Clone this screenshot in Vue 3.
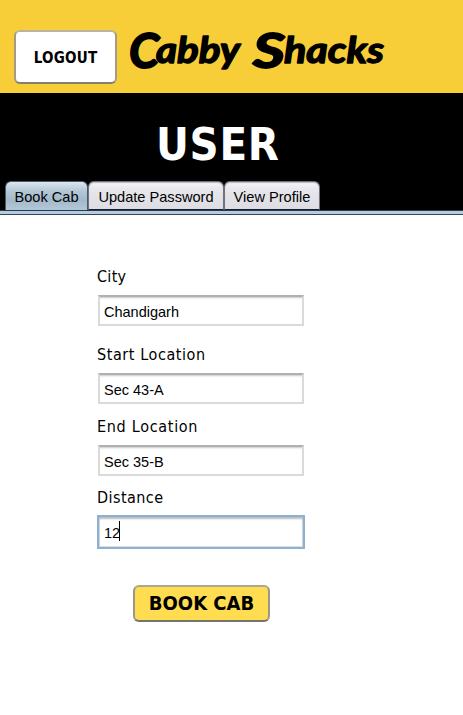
<script setup>
import { ref } from 'vue'

const activeTab = ref('Book Cab')
const tabs = [
  { label: 'Book Cab', size: 'short' },
  { label: 'Update Password', size: 'long' },
  { label: 'View Profile', size: 'medium' },
]
const city = 'Chandigarh'
const start = 'Sec 43-A'
const end = 'Sec 35-B'
const distance = '12'
</script>

<template>
  <main class="app">
    <header class="brand">
      <button class="logout">LOGOUT</button>
      <svg class="logo" width="270" height="60" viewBox="0 0 270 60">
        <text class="cap" x="2" y="42" textLength="30" lengthAdjust="spacingAndGlyphs">C</text>
        <text class="word" x="29" y="37" textLength="84" lengthAdjust="spacingAndGlyphs">abby</text>
        <text class="cap" x="126" y="42" textLength="32" lengthAdjust="spacingAndGlyphs">S</text>
        <text class="word" x="157" y="37" textLength="100" lengthAdjust="spacingAndGlyphs">hacks</text>
      </svg>
    </header>
    <section class="hero">
      <h1>USER</h1>
      <nav class="tabs">
        <button
          v-for="t in tabs"
          :key="t.label"
          :class="['tab', t.size, { active: t.label === activeTab }]"
          @click="activeTab = t.label"
        >{{ t.label }}</button>
      </nav>
    </section>
    <div class="strip"></div>
    <form class="form" @submit.prevent>
      <label class="city">City</label>
      <div class="field">{{ city }}</div>
      <label class="start">Start Location</label>
      <div class="field">{{ start }}</div>
      <label class="end">End Location</label>
      <div class="field">{{ end }}</div>
      <label class="dist">Distance</label>
      <div class="field focused">{{ distance }}<i class="caret"></i></div>
      <button class="book">BOOK CAB</button>
    </form>
  </main>
</template>

<style>
body { background: #fff; }
</style>

<style scoped>
* { box-sizing: border-box; }
button { margin: 0; padding: 0; white-space: nowrap; }
.app {
  width: 463px;
  height: 715px;
  overflow: hidden;
  background: #fff;
  color: #000;
  font-family: "DejaVu Sans Condensed", "DejaVu Sans", sans-serif;
  font-stretch: condensed;
}
.brand {
  height: 93px;
  background: #f7ce37;
  display: flex;
  align-items: flex-start;
  padding: 30px 0 0 14px;
}
.logout {
  width: 103px;
  height: 54px;
  border: 2px solid #aaa;
  border-color: #b9b4a0 #a39c85 #85806e #a39c85;
  border-radius: 6px;
  background: #fff;
  font: bold 15px "DejaVu Sans Condensed", sans-serif;
  font-stretch: condensed;
  letter-spacing: 0.25px;
  padding-top: 2px;
  color: #000;
}
.logo { margin: -4px 0 0 10px; overflow: visible; }
.logo text {
  font-family: Lato, sans-serif;
  font-weight: 700;
  font-style: italic;
  fill: #000;
  stroke: #000;
  stroke-linejoin: round;
  stroke-linecap: round;
}
.logo .cap { font-size: 47px; stroke-width: 1.8px; }
.logo .word { font-size: 36px; stroke-width: 1.4px; }
.hero {
  height: 117px;
  background: #000;
  display: flex;
  flex-direction: column;
}
h1 {
  margin: 25px 0 0 156px;
  height: 54px;
  font-size: 45px;
  line-height: 54px;
  font-weight: bold;
  letter-spacing: 0.7px;
  color: #fff;
}
.tabs { display: flex; margin: 9px 0 0 5px; }
.tab {
  height: 29px;
  border: 1px solid #70737d;
  border-bottom-color: #191e2b;
  border-radius: 6px 6px 0 0;
  background: linear-gradient(#f8f8fa, #e7e7ec 25%, #dcdce2);
  box-shadow: inset 0 1px 1px #b5b6bd;
  font: 14.6px "Liberation Sans", sans-serif;
  line-height: 30px;
  color: #000;
}
.tab.active {
  border-color: #47586d;
  border-bottom: 0;
  background: linear-gradient(#dce6ed, #b2c5d3 35%, #a2b9cb 65%, #b3c8d8);
  box-shadow: none;
}
.short { width: 83px; }
.long { width: 136px; }
.medium { width: 96px; }
.strip {
  height: 5px;
  background: #b5cce0;
  border-top: 1px solid #2d394e;
  border-bottom: 1px solid #35445a;
}
.form { display: flex; flex-direction: column; align-items: flex-start; padding-left: 97px; }
label { font-size: 16px; height: 20px; line-height: 20px; letter-spacing: 0.58px; }
.city { margin-top: 52px; letter-spacing: 0.3px; }
.start { margin-top: 19px; }
.end { margin-top: 13px; letter-spacing: 0.7px; }
.dist { margin-top: 12px; letter-spacing: 0.45px; }
.field {
  width: 206px;
  height: 31px;
  margin: 8px 0 0 1px;
  border: 2px solid #dadada;
  border-top-color: #b0b0b0;
  box-shadow: inset 0 2px 2px -1px #c9c9c9;
  padding-left: 4px;
  font: 14.5px "Liberation Sans", sans-serif;
  line-height: 30px;
  display: flex;
}
.focused {
  width: 208px;
  height: 34px;
  margin: 7px 0 0 0;
  border: 2px solid #8db1d5;
  box-shadow: inset 0 2px 2px #bcbcbc, inset 0 0 0 1px #dedede;
  padding-left: 5px;
  line-height: 32px;
}
.caret { width: 1px; height: 20px; margin: 4px 0 0 -1px; background: #000; }
.book {
  width: 137px;
  height: 37px;
  margin: 36px 0 0 36px;
  border: 2px solid #999;
  border-color: #aaa793 #9b9788 #77746b #9b9788;
  border-radius: 6px;
  background: #ffdc50;
  font: bold 20px "DejaVu Sans Condensed", sans-serif;
  font-stretch: condensed;
  padding-bottom: 2px;
  color: #000;
}
</style>
